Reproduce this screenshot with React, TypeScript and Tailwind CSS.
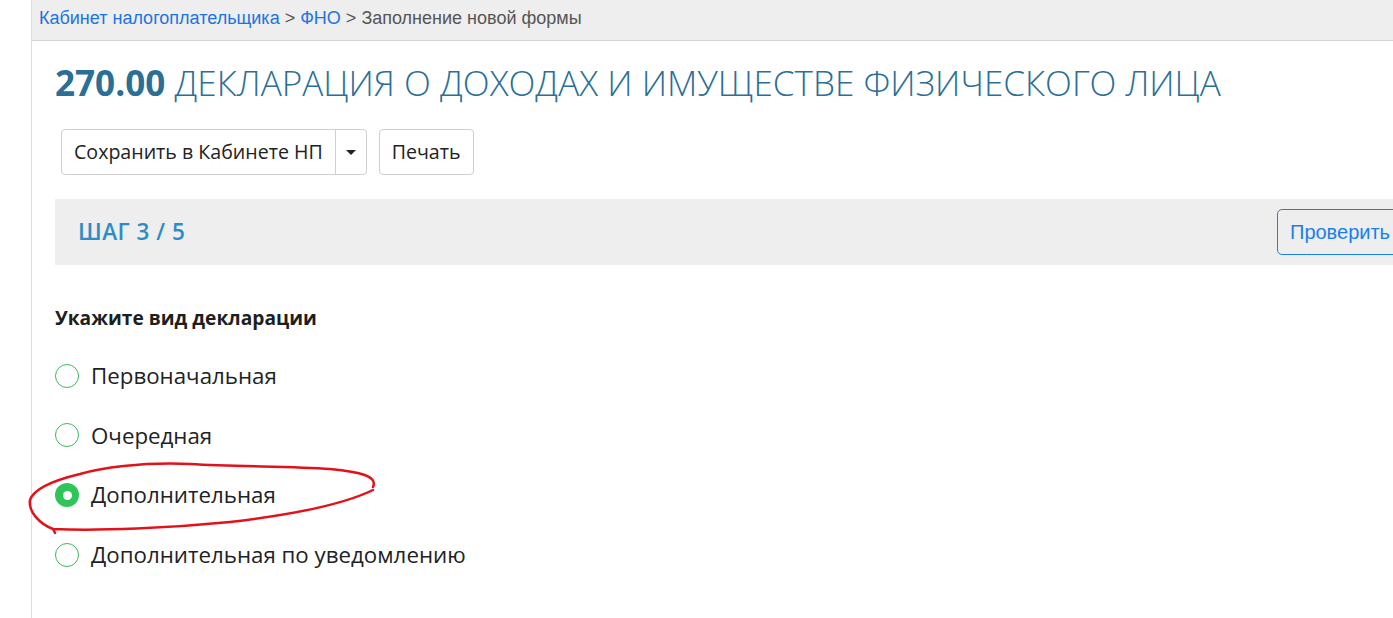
import React from 'react';

const options = [
  { label: 'Первоначальная', checked: false },
  { label: 'Очередная', checked: false },
  { label: 'Дополнительная', checked: true },
  { label: 'Дополнительная по уведомлению', checked: false },
];

function Radio({ checked }: { checked: boolean }) {
  if (checked) {
    return (
      <span className="flex h-[24px] w-[24px] shrink-0 items-center justify-center rounded-full bg-[#2fc659]">
        <span className="h-[9px] w-[9px] rounded-full bg-white" />
      </span>
    );
  }
  return <span className="h-[24px] w-[24px] shrink-0 rounded-full border border-[#3cb860] bg-white" />;
}

export default function App() {
  return (
    <div className="relative flex h-[618px] w-[1393px] overflow-hidden bg-white font-['Open_Sans',sans-serif]">
      <div className="w-[32px] shrink-0 border-r border-[#dcdcdc]" />
      <div className="flex w-[1450px] shrink-0 flex-col">
        {/* breadcrumb */}
        <div className="flex h-[41px] items-center border-b border-[#d4d4d4] bg-[#eeeeee] pl-[7px] pb-[4px] font-['Liberation_Sans',sans-serif] text-[18px]">
          <span className="text-[#1b74e4]">Кабинет налогоплательщика</span>
          <span className="mx-[5px] text-[#555]">&gt;</span>
          <span className="text-[#1b74e4]">ФНО</span>
          <span className="mx-[5px] text-[#555]">&gt;</span>
          <span className="text-[#555]">Заполнение новой формы</span>
        </div>

        <div className="pl-[23px]">
          <h1 className="mt-[17px] text-[35.1px] leading-[48px] text-[#2b6f97]">
            <span className="font-bold">270.00</span>{' '}
            <span className="font-light">ДЕКЛАРАЦИЯ О ДОХОДАХ И ИМУЩЕСТВЕ ФИЗИЧЕСКОГО ЛИЦА</span>
          </h1>

          <div className="mt-[23px] ml-[6px] flex gap-[12px]">
            <div className="flex h-[46px] rounded-[4px] border border-[#cfcfcf] bg-white text-[19.6px] text-[#222]">
              <span className="flex items-center px-[12px]">Сохранить в Кабинете НП</span>
              <span className="flex w-[31px] items-center justify-center border-l border-[#cfcfcf]">
                <span className="h-0 w-0 border-x-[5px] border-t-[5px] border-x-transparent border-t-[#222]" />
              </span>
            </div>
            <div className="flex h-[46px] items-center rounded-[4px] border border-[#cfcfcf] bg-white px-[12px] text-[19.6px] text-[#222]">
              Печать
            </div>
          </div>

          <div className="mt-[24px] flex h-[66px] w-[1362px] items-center justify-between bg-[#eeeeee] pl-[23px] pr-[10px]">
            <span className="text-[22.5px] font-semibold tracking-[0.5px] text-[#2d8cc8]">ШАГ 3 / 5</span>
            <span className="flex h-[46px] w-[130px] items-center rounded-[5px] border border-[#1a7ff0] px-[12px] font-['Liberation_Sans',sans-serif] text-[20px] text-[#1a7ff0]">
              Проверить
            </span>
          </div>

          <div className="mt-[39px] text-[19.2px] font-bold text-[#1e1e1e]">Укажите вид декларации</div>

          <div className="mt-[31px] flex flex-col gap-[35.7px]">
            {options.map((o) => (
              <div key={o.label} className="flex h-[24px] items-center gap-[12px]">
                <Radio checked={o.checked} />
                <span className="text-[22.3px] text-[#222]">{o.label}</span>
              </div>
            ))}
          </div>
        </div>
      </div>

      {/* hand-drawn highlight */}
      <svg className="pointer-events-none absolute left-0 top-0" width="1393" height="618">
        <path
          d="M373 487 C 378 476, 360 472, 330 469 C 290 466, 240 467, 190 464 C 140 462, 100 468, 80 474 C 55 480, 34 488, 30 500 C 28 512, 40 524, 53 529 L 55 533 M 53 529 C 100 531, 170 528, 230 522 C 290 515, 340 506, 373 490"
          fill="none"
          stroke="#e3121a"
          strokeWidth="2.5"
          strokeLinecap="round"
        />
      </svg>
    </div>
  );
}
